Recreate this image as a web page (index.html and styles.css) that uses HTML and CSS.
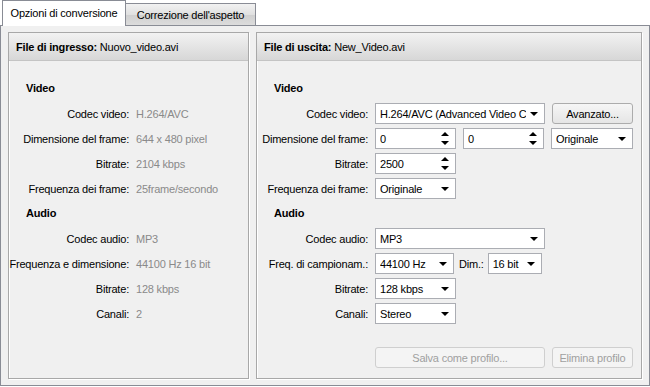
FILE: index.html
```html
<!DOCTYPE html>
<html>
<head>
<meta charset="utf-8">
<link rel="stylesheet" href="styles.css">
</head>
<body>
<div class="tabs">
  <div class="tab active">Opzioni di conversione</div>
  <div class="tab">Correzione dell'aspetto</div>
</div>
<div class="pane">
  <div class="group left">
    <div class="ghead"><b>File di ingresso:</b> Nuovo_video.avi</div>
    <div class="gbody">
      <div class="sec">Video</div>
      <div class="row"><span class="lab">Codec video:</span><span class="val">H.264/AVC</span></div>
      <div class="row"><span class="lab">Dimensione del frame:</span><span class="val">644 x 480 pixel</span></div>
      <div class="row"><span class="lab">Bitrate:</span><span class="val">2104 kbps</span></div>
      <div class="row"><span class="lab">Frequenza dei frame:</span><span class="val">25frame/secondo</span></div>
      <div class="sec">Audio</div>
      <div class="row"><span class="lab">Codec audio:</span><span class="val">MP3</span></div>
      <div class="row"><span class="lab">Frequenza e dimensione:</span><span class="val">44100 Hz 16 bit</span></div>
      <div class="row"><span class="lab">Bitrate:</span><span class="val">128 kbps</span></div>
      <div class="row"><span class="lab">Canali:</span><span class="val">2</span></div>
    </div>
  </div>
  <div class="group right">
    <div class="ghead"><b>File di uscita:</b> New_Video.avi</div>
    <div class="gbody">
      <div class="sec">Video</div>
      <div class="row">
        <span class="lab">Codec video:</span>
        <div class="ctl sel w170"><span>H.264/AVC (Advanced Video C</span><i class="dd"></i></div>
        <div class="btn">Avanzato...</div>
      </div>
      <div class="row">
        <span class="lab">Dimensione del frame:</span>
        <div class="ctl spin w81"><span>0</span><i class="sp"></i></div>
        <div class="ctl spin w81"><span>0</span><i class="sp"></i></div>
        <div class="ctl sel w82"><span>Originale</span><i class="dd"></i></div>
      </div>
      <div class="row">
        <span class="lab">Bitrate:</span>
        <div class="ctl spin w81"><span>2500</span><i class="sp"></i></div>
      </div>
      <div class="row">
        <span class="lab">Frequenza dei frame:</span>
        <div class="ctl sel w81"><span>Originale</span><i class="dd"></i></div>
      </div>
      <div class="sec">Audio</div>
      <div class="row">
        <span class="lab">Codec audio:</span>
        <div class="ctl sel w170"><span>MP3</span><i class="dd"></i></div>
      </div>
      <div class="row">
        <span class="lab">Freq. di campionam.:</span>
        <div class="ctl sel w79"><span>44100 Hz</span><i class="dd"></i></div>
        <span class="lab2">Dim.:</span>
        <div class="ctl sel w54"><span>16 bit</span><i class="dd"></i></div>
      </div>
      <div class="row">
        <span class="lab">Bitrate:</span>
        <div class="ctl sel w81"><span>128 kbps</span><i class="dd"></i></div>
      </div>
      <div class="row">
        <span class="lab">Canali:</span>
        <div class="ctl sel w81"><span>Stereo</span><i class="dd"></i></div>
      </div>
      <div class="btns">
        <div class="btn dis wide">Salva come profilo...</div>
        <div class="btn dis">Elimina profilo</div>
      </div>
    </div>
  </div>
</div>
</body>
</html>
```
FILE: styles.css
```css
html, body {
  margin: 0;
  padding: 0;
  background: #ffffff;
  width: 650px;
  height: 387px;
  overflow: hidden;
  font-family: "Liberation Sans", Arial, sans-serif;
  font-size: 11px;
  letter-spacing: -0.2px;
  color: #000;
}
.tabs {
  display: flex;
  height: 25px;
  padding-left: 2px;
  align-items: flex-end;
}
.tab {
  box-sizing: border-box;
  height: 22px;
  border: 1px solid #898c95;
  border-bottom: none;
  background: linear-gradient(#f2f2f2, #e0e0e0 50%, #cfcfcf 51%, #dcdcdc);
  display: flex;
  align-items: center;
  justify-content: center;
  white-space: nowrap;
  margin-left: -1px;
  width: 131px;
}
.tab.active {
  width: 124px;
  margin-left: 0;
  background: #ffffff;
  position: relative;
  z-index: 1;
  margin-bottom: -1px;
  height: 26px;
  padding-bottom: 2px;
}
.pane {
  box-sizing: border-box;
  height: 361px;
  width: 650px;
  border: 1px solid #898c95;
  background: #f0f0f0;
  display: flex;
  padding: 6px 7px 6px 7px;
  gap: 7px;
}
.group {
  box-sizing: border-box;
  border: 1px solid #a8a8a8;
  box-shadow: 1px 1px 0 #ffffff, inset 1px 1px 0 #ffffff;
  display: flex;
  flex-direction: column;
  background: #f0f0f0;
}
.left { width: 241px; }
.right { width: 386px; }
.ghead {
  height: 28px;
  box-sizing: border-box;
  border-bottom: 1px solid #c4c4c4;
  background: linear-gradient(#f2f2f2, #d7d7d7);
  display: flex;
  align-items: center;
  padding-left: 7px;
  white-space: pre;
}
.ghead b { font-weight: bold; }
.gbody {
  flex: 1;
  padding-top: 15px;
}
.sec {
  font-weight: bold;
  height: 25px;
  line-height: 25px;
  padding-left: 17px;
}
.left .row {
  height: 25px;
  display: flex;
  align-items: center;
}
.left .lab {
  width: 120px;
  text-align: right;
  white-space: nowrap;
}
.val {
  color: #8a8a8a;
  padding-left: 7px;
}
.right .row {
  height: 25px;
  display: flex;
  align-items: center;
  gap: 7px;
}
.right .lab {
  width: 111px;
  text-align: right;
  white-space: nowrap;
}
.lab2 { margin-left: -2px; margin-right: -3px; }
.ctl {
  box-sizing: border-box;
  height: 21px;
  border: 1px solid #abadb3;
  background: #ffffff;
  display: flex;
  align-items: center;
  padding-left: 4px;
  white-space: nowrap;
  overflow: hidden;
}
.ctl span { flex: 1; overflow: hidden; }
.w170 { width: 170px; }
.w81 { width: 81px; }
.w82 { width: 82px; }
.w79 { width: 79px; }
.w54 { width: 54px; }
.dd {
  width: 0; height: 0;
  border-left: 4px solid transparent;
  border-right: 4px solid transparent;
  border-top: 4px solid #000;
  margin: 0 6px 0 4px;
  flex: none;
}
.sp {
  flex: none;
  width: 8px;
  height: 13px;
  margin-right: 6px;
  position: relative;
}
.sp::before, .sp::after {
  content: "";
  position: absolute;
  left: 0;
  border-left: 4px solid transparent;
  border-right: 4px solid transparent;
}
.sp::before { top: 0; border-bottom: 4px solid #000; }
.sp::after { bottom: 0; border-top: 4px solid #000; }
.btn {
  box-sizing: border-box;
  height: 21px;
  width: 81px;
  border: 1px solid #acacac;
  border-radius: 3px;
  background: linear-gradient(#f6f6f6, #e5e5e5);
  display: flex;
  align-items: center;
  justify-content: center;
  white-space: nowrap;
}
.btn.wide { width: 170px; }
.btn.dis {
  border-color: #cfcfcf;
  background: #f4f4f4;
  color: #a0a0a0;
}
.btns {
  display: flex;
  gap: 7px;
  padding-left: 118px;
  margin-top: 21px;
}
```
